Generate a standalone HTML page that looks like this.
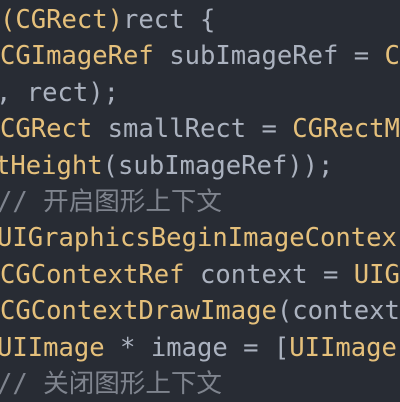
<!DOCTYPE html>
<html><head><style>
html,body{margin:0;padding:0;background:#282c34;width:400px;height:400px;overflow:hidden}
.l{position:absolute;white-space:pre;font-family:"DejaVu Sans Mono","Noto Sans CJK SC",monospace;font-size:25.55px;line-height:36.4px;color:#abb2bf}
.y{color:#e5c07b}.c{color:#7f848e}
</style></head><body>
<div class="l" style="top:2px;left:0"><span class="y">(CGRect)</span>rect {</div>
<div class="l" style="top:38.4px;left:0"><span class="y">CGImageRef</span> subImageRef = <span class="y">C</span></div>
<div class="l" style="top:74.8px;left:-4px">, rect);</div>
<div class="l" style="top:111.2px;left:0"><span class="y">CGRect</span> smallRect = <span class="y">CGRectM</span></div>
<div class="l" style="top:147.6px;left:-5px"><span class="y">tHeight</span>(subImageRef));</div>
<div class="l c" style="top:184px;left:-3px">// 开启图形上下文</div>
<div class="l y" style="top:220.4px;left:-3px">UIGraphicsBeginImageContex</div>
<div class="l" style="top:256.8px;left:0"><span class="y">CGContextRef</span> context = <span class="y">UIG</span></div>
<div class="l" style="top:293.2px;left:0"><span class="y">CGContextDrawImage</span>(context</div>
<div class="l" style="top:329.6px;left:-3px"><span class="y">UIImage</span> * image = [<span class="y">UIImage</span></div>
<div class="l c" style="top:366px;left:-3px">// 关闭图形上下文</div>
</body></html>
